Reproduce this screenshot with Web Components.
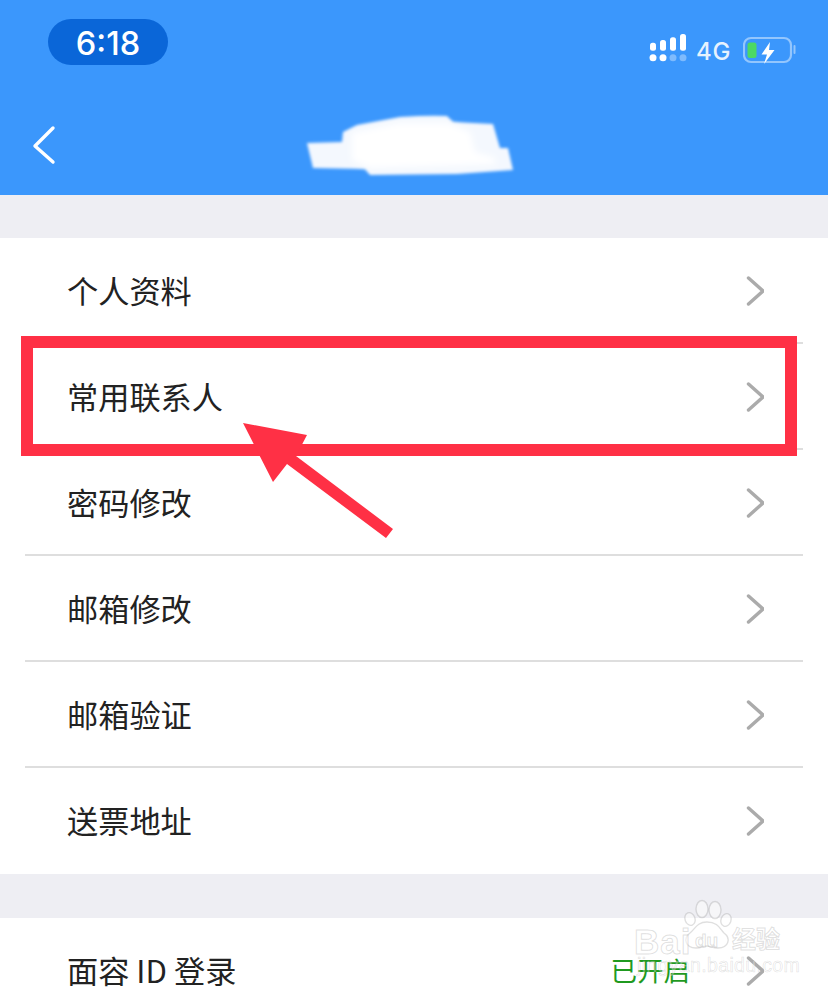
<!DOCTYPE html>
<html lang="zh">
<head>
<meta charset="utf-8">
<title>个人中心</title>
<style>
html,body{margin:0;padding:0;background:#eeeef3;}
body{width:828px;height:994px;overflow:hidden;font-family:"Noto Sans CJK SC","Noto Sans",sans-serif;}
</style>
</head>
<body>
<account-screen>
  <nav-header></nav-header>
  <settings-group>
    <settings-row label="个人资料"></settings-row>
    <settings-row label="常用联系人"></settings-row>
    <settings-row label="密码修改"></settings-row>
    <settings-row label="邮箱修改"></settings-row>
    <settings-row label="邮箱验证"></settings-row>
    <settings-row label="送票地址" last></settings-row>
  </settings-group>
  <settings-group>
    <settings-row label="面容 ID 登录" value="已开启" last></settings-row>
  </settings-group>
  <red-annotation slot="overlay"></red-annotation>
  <baidu-mark slot="overlay"></baidu-mark>
</account-screen>

<script>
class AccountScreen extends HTMLElement{
  constructor(){
    super();
    this.attachShadow({mode:"open"});
  }
  connectedCallback(){
    this.shadowRoot.innerHTML=`
      <style>
        :host{display:block;position:relative;width:828px;height:994px;overflow:hidden;background:#eeeef3;}
        .stack{display:flex;flex-direction:column;gap:44px;}
      </style>
      <div class="stack"><slot></slot></div>
      <slot name="overlay"></slot>`;
  }
}

class NavHeader extends HTMLElement{
  constructor(){
    super();
    this.attachShadow({mode:"open"});
  }
  connectedCallback(){
    this.shadowRoot.innerHTML=`
      <style>
        :host{display:block;height:195px;margin-bottom:-1px;background:#3b97fc;color:#fff;}
        .status{display:flex;align-items:center;justify-content:space-between;padding:19px 31px 0 48px;height:46px;}
        .time{width:120px;height:44px;padding-top:2px;border-radius:23px;background:#0a66d8;display:flex;align-items:center;justify-content:center;
          font:500 32.5px Inter,"Liberation Sans",sans-serif;}
        .right{display:flex;align-items:center;margin-top:16px;}
        .net{font:500 24px Inter,"Liberation Sans",sans-serif;color:rgba(255,255,255,.88);letter-spacing:.6px;margin:3px 12px 0 9px;}
        .bar{position:relative;height:130px;}
        svg{display:block;}
        .bar svg{width:828px;height:130px;}
      </style>
      <div class="status">
        <div class="time">6:18</div>
        <div class="right">
          <svg width="38" height="36" viewBox="0 0 38 36">
            <g fill="#fff">
              <rect x="1" y="10.7" width="6" height="8" rx="2.5"/>
              <rect x="11" y="8" width="6" height="10.7" rx="2.5"/>
              <rect x="21" y="5.3" width="6" height="13.4" rx="2.5"/>
              <rect x="31" y="2" width="6" height="16.7" rx="2.5"/>
              <circle cx="4" cy="25.7" r="3.5"/>
              <circle cx="14" cy="25.7" r="3.5"/>
              <circle cx="24" cy="25.7" r="3.5" opacity=".35"/>
              <circle cx="34" cy="25.7" r="3.5" opacity=".35"/>
            </g>
          </svg>
          <span class="net">4G</span>
          <svg width="54" height="30" viewBox="0 0 54 30">
            <rect x="1" y="3" width="47" height="24" rx="7" fill="none" stroke="#fff" stroke-opacity=".45" stroke-width="2.2"/>
            <rect x="4.5" y="7.5" width="9" height="15.5" rx="2.5" fill="#4cd964"/>
            <path d="M27 7 L18.5 19.5 L24 19.5 L21 29 L31.5 15 L26 15 Z" fill="#fff"/>
            <rect x="50.5" y="10" width="2" height="9" rx="1" fill="#fff" fill-opacity=".45"/>
          </svg>
        </div>
      </div>
      <div class="bar">
        <svg viewBox="0 65 828 130">
          <defs>
            <filter id="soft" x="-10%" y="-20%" width="120%" height="140%"><feGaussianBlur stdDeviation="1.8"/></filter>
            <filter id="softer" x="-10%" y="-20%" width="120%" height="140%"><feGaussianBlur stdDeviation="3"/></filter>
          </defs>
          <path d="M35 146 L53 128 M35 146 L53 162" fill="none" stroke="#fff" stroke-width="3.4" stroke-linecap="round"/>
          <path d="M307 143 L342 142 L343 132 L357 125 L400 117 Q430 115 447 116 L453 122 L493 124 L500 148 L508 148 L513 170 L457 174 L370 175 L365 169 L313 168 Z" fill="#f4f8fe" filter="url(#soft)"/>
          <path d="M352 133 L400 123 L448 123 L470 132 L475 152 L495 158 L495 164 L370 168 L352 160 Z" fill="#fff" filter="url(#softer)"/>
        </svg>
      </div>`;
  }
}

class SettingsGroup extends HTMLElement{
  constructor(){
    super();
    this.attachShadow({mode:"open"});
  }
  connectedCallback(){
    this.shadowRoot.innerHTML=`
      <style>
        :host{display:block;background:#fff;}
      </style>
      <slot></slot>`;
  }
}

class SettingsRow extends HTMLElement{
  constructor(){
    super();
    this.attachShadow({mode:"open"});
  }
  connectedCallback(){
    const label=this.getAttribute("label")||"";
    const value=this.getAttribute("value");
    const last=this.hasAttribute("last");
    this.shadowRoot.innerHTML=`
      <style>
        :host{display:block;}
        .row{display:flex;align-items:center;height:${last?106:105}px;padding:0 64px 0 67px;
          font:400 31.2px "Noto Sans CJK SC","Noto Sans",sans-serif;color:#222;}
        .label{flex:1;white-space:pre;padding-bottom:3px;}
        .value{font-size:26.5px;color:#1f9a1f;margin-right:56px;padding-bottom:3px;}
        .line{height:2px;margin:-1px 25px 0;background:#dedede;}
        svg{display:block;width:18px;height:30px;}
      </style>
      <div class="row">
        <span class="label">${label}</span>
        ${value?`<span class="value">${value}</span>`:""}
        <svg viewBox="0 0 18 30"><path d="M2.5 2 L17 15 L2.5 28" fill="none" stroke="#ababab" stroke-width="3.4" stroke-linecap="round" stroke-linejoin="round"/></svg>
      </div>
      ${last?"":'<div class="line"></div>'}`;
  }
}

class RedAnnotation extends HTMLElement{
  constructor(){
    super();
    this.attachShadow({mode:"open"});
  }
  connectedCallback(){
    this.shadowRoot.innerHTML=`
      <style>
        :host{position:absolute;inset:0;display:block;pointer-events:none;}
        .box{position:absolute;left:21px;top:336px;width:752px;height:96px;border:12px solid #ff3045;}
        svg{position:absolute;left:0;top:0;width:828px;height:994px;}
      </style>
      <div class="box"></div>
      <svg viewBox="0 0 828 994">
        <polygon points="243,423 307,435 296,456 393,529 386,538 287,464 273,482" fill="#ff3045"/>
      </svg>`;
  }
}

class BaiduMark extends HTMLElement{
  constructor(){
    super();
    this.attachShadow({mode:"open"});
  }
  connectedCallback(){
    this.shadowRoot.innerHTML=`
      <style>
        :host{position:absolute;left:630px;top:900px;width:160px;height:80px;display:block;pointer-events:none;}
        svg{position:absolute;left:0;top:0;width:160px;height:80px;overflow:visible;}
        span{position:absolute;white-space:nowrap;color:rgba(255,255,255,.5);-webkit-text-stroke:1px rgba(150,150,150,.3);line-height:1;}
        .bai{left:4px;top:24px;font:700 35px "Liberation Sans",sans-serif;letter-spacing:1px;line-height:1;}
        .du{left:65px;top:31px;font:700 19px "Liberation Sans",sans-serif;line-height:1;}
        .jy{left:102px;top:26px;font:700 24px "Noto Sans CJK SC",sans-serif;line-height:1;}
        .site{left:7px;top:56px;font:400 19.5px "Liberation Sans",sans-serif;line-height:1;letter-spacing:.35px;-webkit-text-stroke:.6px rgba(150,150,150,.3);color:rgba(255,255,255,.35);}
      </style>
      <svg viewBox="0 0 160 80">
        <g fill="rgba(255,255,255,.45)" stroke="rgba(150,150,150,.3)" stroke-width="1.4">
          <ellipse cx="72" cy="9" rx="6" ry="8.5"/>
          <ellipse cx="85" cy="10" rx="6" ry="8.5"/>
          <ellipse cx="60" cy="19" rx="5" ry="6.5" transform="rotate(-20 60 19)"/>
          <ellipse cx="96" cy="20" rx="5" ry="6.5" transform="rotate(20 96 20)"/>
          <path d="M77 22 C88 22 90 29 94 33 C101 38 99 48 88 48 C83 48 80 46 77 46 C74 46 71 48 66 48 C55 48 53 38 60 33 C65 29 67 22 77 22 Z"/>
        </g>
      </svg>
      <span class="bai">Bai</span>
      <span class="du">du</span>
      <span class="jy">经验</span>
      <span class="site">jingyan.baidu.com</span>`;
  }
}

customElements.define("account-screen",AccountScreen);
customElements.define("nav-header",NavHeader);
customElements.define("settings-group",SettingsGroup);
customElements.define("settings-row",SettingsRow);
customElements.define("red-annotation",RedAnnotation);
customElements.define("baidu-mark",BaiduMark);
</script>
</body>
</html>
